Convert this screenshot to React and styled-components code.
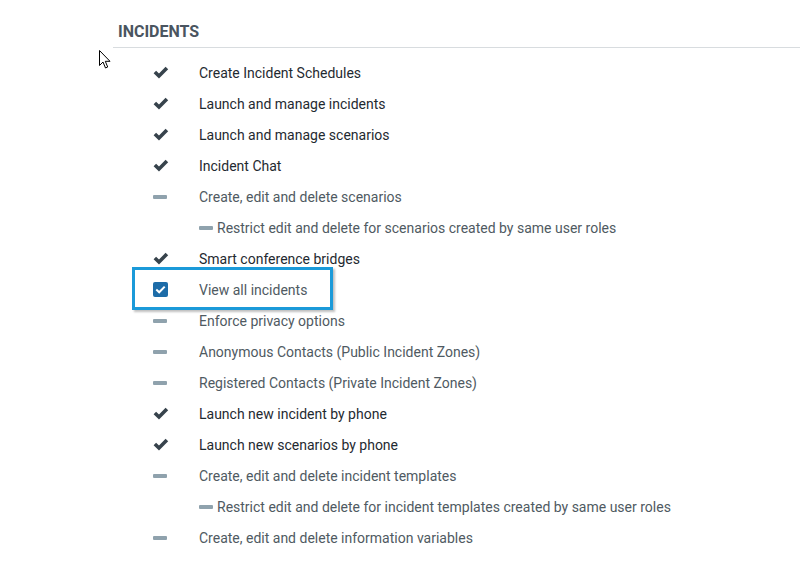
import React from 'react';
import styled, { createGlobalStyle } from 'styled-components';

const GlobalStyle = createGlobalStyle`
  body {
    margin: 0;
    background: #ffffff;
    font-family: Roboto, "Liberation Sans", sans-serif;
  }
`;

const Page = styled.div`
  position: relative;
  width: 800px;
  height: 582px;
  padding-left: 113px;
  box-sizing: border-box;
  overflow: hidden;
`;

const Header = styled.div`
  height: 47px;
  border-bottom: 1px solid #d8dcdf;
  padding-left: 5px;
  box-sizing: content-box;
  display: flex;
  align-items: flex-end;
`;

const Title = styled.h2`
  margin: 0 0 6px;
  font-size: 16px;
  font-weight: 700;
  color: #4a5560;
  letter-spacing: 0;
`;

const List = styled.div`
  padding-top: 9px;
  padding-left: 27px;
  display: flex;
  flex-direction: column;
`;

const Row = styled.div`
  position: relative;
  height: 31px;
  display: flex;
  align-items: center;
  font-size: 14px;
  color: ${p => (p.$on ? '#1f2a31' : '#4f5a62')};

  ${p =>
    p.$focus &&
    `
    &::after {
      content: '';
      position: absolute;
      left: -8px;
      top: -7px;
      width: 195px;
      height: 37px;
      border: 3px solid #1b9ad9;
      box-shadow: 2px 2px 2px rgba(0, 0, 0, 0.25);
      pointer-events: none;
    }
  `}
`;

const IconCell = styled.span`
  width: 59px;
  flex: 0 0 59px;
  display: flex;
  align-items: center;
  padding-left: 13px;
  box-sizing: border-box;
`;

const SubRow = styled.span`
  display: flex;
  align-items: center;
  gap: 4px;
`;

const Dash = styled.span`
  display: inline-block;
  width: 14px;
  height: 4px;
  border-radius: 1px;
  background: #8fa2ad;
`;

const Box = styled.span`
  width: 15px;
  height: 15px;
  border-radius: 2px;
  background: #1d6ca8;
  display: flex;
  align-items: center;
  justify-content: center;
`;

const Cursor = styled.svg`
  position: absolute;
  left: 99px;
  top: 50px;
`;

const Check = () => (
  <svg width="16" height="13" viewBox="0 0 16 13">
    <path d="M0.6 7.2 L3.1 4.7 L6 7.4 L12.6 0.8 L15.2 3.3 L6 12.4 Z" fill="#37434c" />
  </svg>
);

const SmallCheck = () => (
  <svg width="11" height="9" viewBox="0 0 11 9">
    <path d="M1.3 4.6 L4.2 7.3 L9.7 1.6" stroke="#fff" strokeWidth="2" fill="none" />
  </svg>
);

const items = [
  { t: 'Create Incident Schedules', on: true },
  { t: 'Launch and manage incidents', on: true },
  { t: 'Launch and manage scenarios', on: true },
  { t: 'Incident Chat', on: true },
  { t: 'Create, edit and delete scenarios' },
  { t: 'Restrict edit and delete for scenarios created by same user roles', sub: true },
  { t: 'Smart conference bridges', on: true },
  { t: 'View all incidents', box: true },
  { t: 'Enforce privacy options' },
  { t: 'Anonymous Contacts (Public Incident Zones)' },
  { t: 'Registered Contacts (Private Incident Zones)' },
  { t: 'Launch new incident by phone', on: true },
  { t: 'Launch new scenarios by phone', on: true },
  { t: 'Create, edit and delete incident templates' },
  { t: 'Restrict edit and delete for incident templates created by same user roles', sub: true },
  { t: 'Create, edit and delete information variables' },
];

export default function App() {
  return (
    <Page>
      <GlobalStyle />
      <Header>
        <Title>INCIDENTS</Title>
      </Header>
      <List>
        {items.map((it, i) => (
          <Row key={i} $on={it.on} $focus={it.box}>
            <IconCell>
              {it.on && <Check />}
              {it.box && <Box><SmallCheck /></Box>}
              {!it.on && !it.box && !it.sub && <Dash />}
            </IconCell>
            {it.sub ? (
              <SubRow>
                <Dash />
                {it.t}
              </SubRow>
            ) : (
              it.t
            )}
          </Row>
        ))}
      </List>
      <Cursor width="13" height="20" viewBox="0 0 13 20">
        <path d="M0.5 0.5 L0.5 15.5 L4 12 L6.5 18 L8.7 17 L6.3 11.3 L11 11.3 Z" fill="#fff" stroke="#000" strokeWidth="1" />
      </Cursor>
    </Page>
  );
}
